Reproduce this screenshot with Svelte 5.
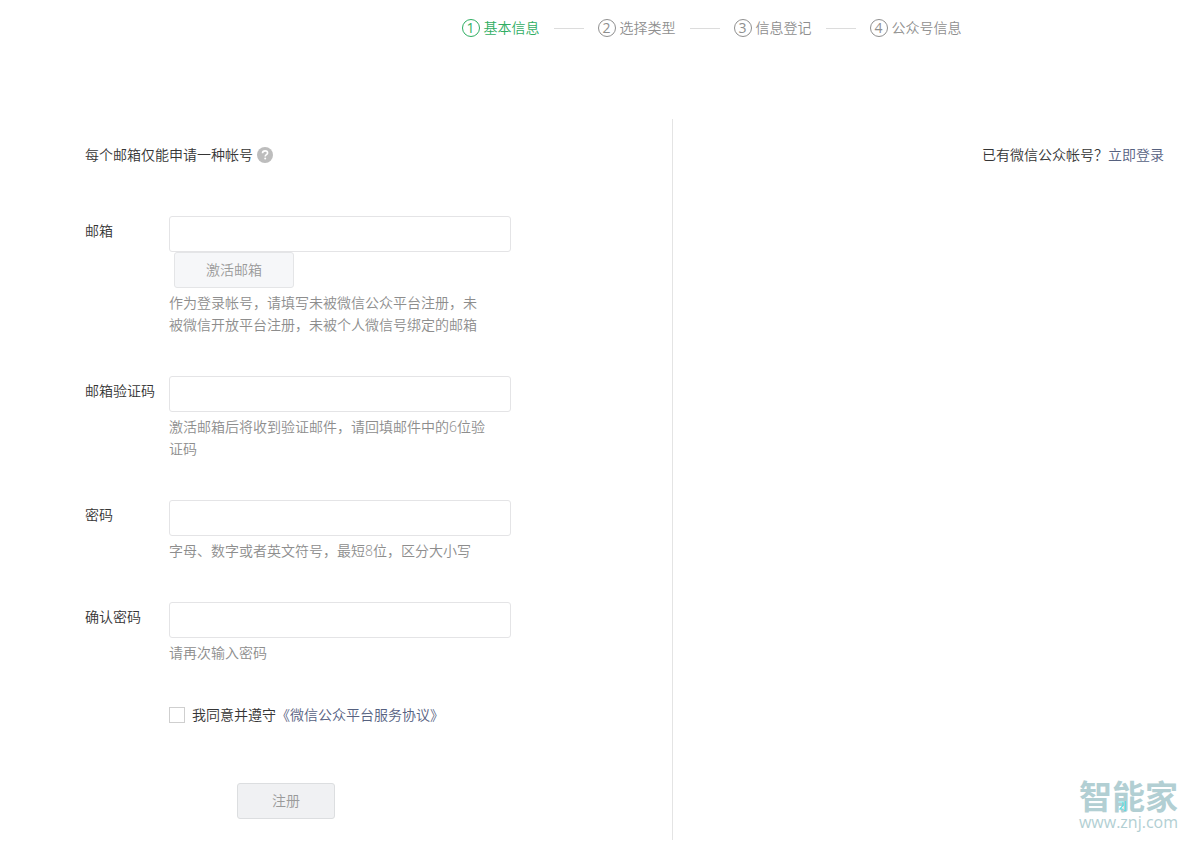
<script>
  const steps = ['基本信息', '选择类型', '信息登记', '公众号信息'];
  let email = $state('');
  let code = $state('');
  let password = $state('');
  let confirm = $state('');
  let agreed = $state(false);
</script>

<div class="page">
  <ol class="steps">
    {#each steps as step, i}
      <li class:current={i === 0}>
        <span class="num">{i + 1}</span>
        <span>{step}</span>
      </li>
    {/each}
  </ol>

  <main>
    <form class="register">
      <p class="intro">
        每个邮箱仅能申请一种帐号
        <svg class="help" viewBox="0 0 16 16" aria-hidden="true">
          <circle cx="8" cy="8" r="8" fill="#bdbdbd" />
          <path d="M5.5 6.3C5.5 4.8 6.6 3.9 8.1 3.9s2.5.9 2.5 2.1c0 1.7-2.4 1.7-2.4 3.5" fill="none" stroke="#fff" stroke-width="1.6" />
          <circle cx="8.2" cy="11.6" r="1" fill="#fff" />
        </svg>
      </p>

      <div class="field">
        <label for="email">邮箱</label>
        <div class="control">
          <input id="email" type="text" bind:value={email} />
          <button class="activate" type="button">激活邮箱</button>
          <p class="hint">作为登录帐号，请填写未被微信公众平台注册，未被微信开放平台注册，未被个人微信号绑定的邮箱</p>
        </div>
      </div>
      <div class="field">
        <label for="code">邮箱验证码</label>
        <div class="control">
          <input id="code" type="text" bind:value={code} />
          <p class="hint">激活邮箱后将收到验证邮件，请回填邮件中的6位验证码</p>
        </div>
      </div>
      <div class="field">
        <label for="password">密码</label>
        <div class="control">
          <input id="password" type="password" bind:value={password} />
          <p class="hint">字母、数字或者英文符号，最短8位，区分大小写</p>
        </div>
      </div>
      <div class="field">
        <label for="confirm">确认密码</label>
        <div class="control">
          <input id="confirm" type="password" bind:value={confirm} />
          <p class="hint">请再次输入密码</p>
        </div>
      </div>

      <div class="agree">
        <input id="agree" type="checkbox" bind:checked={agreed} />
        <label for="agree">我同意并遵守</label><a href="#agreement">《微信公众平台服务协议》</a>
      </div>

      <button class="submit" type="submit">注册</button>
    </form>

    <aside>
      <p>已有微信公众帐号？<a href="#login">立即登录</a></p>
      <div class="brand">
        <span class="name">智能家</span>
        <span class="url">www.znj.com</span>
        <svg class="accent" viewBox="0 0 10 12" aria-hidden="true">
          <path d="M1 2h4v3.500L2 9h3M7.500 1v9.500H6" fill="none" stroke="#5fdde0" stroke-width="1.200" />
        </svg>
      </div>
    </aside>
  </main>
</div>

<style>
  :global(body) {
    margin: 0;
    background: #fff;
  }
  .page {
    font: 350 14px/22px "Open Sans", "Noto Sans CJK SC", sans-serif;
    color: #353535;
  }
  .steps {
    display: flex;
    justify-content: center;
    margin: 0;
    padding: 17px 0 80px 235px;
    list-style: none;
    color: #8f8f8f;
  }
  .steps li {
    display: flex;
    align-items: center;
    gap: 4px;
    white-space: nowrap;
  }
  .steps li + li::before {
    content: "";
    width: 30px;
    height: 1px;
    margin: 0 10px 0 14px;
    background: #dcdcdc;
  }
  .steps .current {
    color: #2fae62;
  }
  .num {
    box-sizing: border-box;
    width: 18px;
    height: 18px;
    border: 1px solid currentColor;
    border-radius: 50%;
    font-weight: 400;
    line-height: 16px;
    text-align: center;
  }
  main {
    display: grid;
    grid-template-columns: 673fr 515fr;
  }
  .register {
    box-sizing: border-box;
    padding: 25px 0 21px 85px;
    border-right: 1px solid #e4e4e4;
  }
  p {
    margin: 0;
  }
  .intro {
    display: flex;
    align-items: center;
    gap: 4px;
    margin-bottom: 50px;
  }
  .help {
    width: 16px;
    height: 16px;
  }
  .field {
    display: flex;
    margin-bottom: 40px;
  }
  .field label {
    flex: none;
    width: 84px;
    padding-top: 4px;
  }
  .control {
    flex: 1;
    max-width: 342px;
  }
  .control input {
    display: block;
    box-sizing: border-box;
    width: 100%;
    height: 36px;
    padding: 0 10px;
    border: 1px solid #e4e4e6;
    border-radius: 3px;
    background: #fff;
    font: inherit;
    color: inherit;
  }
  .hint {
    max-width: 320px;
    padding-top: 4px;
    color: #8d8d8d;
  }
  button {
    display: block;
    box-sizing: border-box;
    height: 36px;
    padding: 0;
    border: 1px solid #e4e5e7;
    border-radius: 3px;
    background: #f6f7f9;
    font: inherit;
    color: #9a9a9a;
  }
  .activate {
    width: 120px;
    margin-left: 5px;
  }
  .submit {
    width: 98px;
    margin-left: 152px;
    border-color: #dcdee0;
    background: #f0f1f3;
  }
  .agree {
    display: flex;
    align-items: center;
    margin: 0 0 57px 84px;
  }
  .agree input {
    appearance: none;
    box-sizing: border-box;
    width: 16px;
    height: 16px;
    margin: 0 7px 0 0;
    border: 1px solid #cfcfcf;
    background: #fff;
  }
  .agree input:checked {
    background: #2fae62;
  }
  a {
    color: #56617f;
    text-decoration: none;
  }
  aside {
    display: flex;
    flex-direction: column;
    justify-content: space-between;
    padding: 25px 24px 8px 0;
    text-align: right;
  }
  .brand {
    position: relative;
    display: flex;
    flex-direction: column;
    align-items: center;
    align-self: flex-end;
    margin-right: -14px;
    color: #b2cfd3;
  }
  .name {
    font-size: 33px;
    font-weight: 700;
    line-height: 30px;
  }
  .url {
    font-size: 16px;
    font-weight: 500;
    line-height: 20px;
  }
  .accent {
    position: absolute;
    left: 39px;
    top: 18px;
    width: 10px;
    height: 12px;
  }
</style>
